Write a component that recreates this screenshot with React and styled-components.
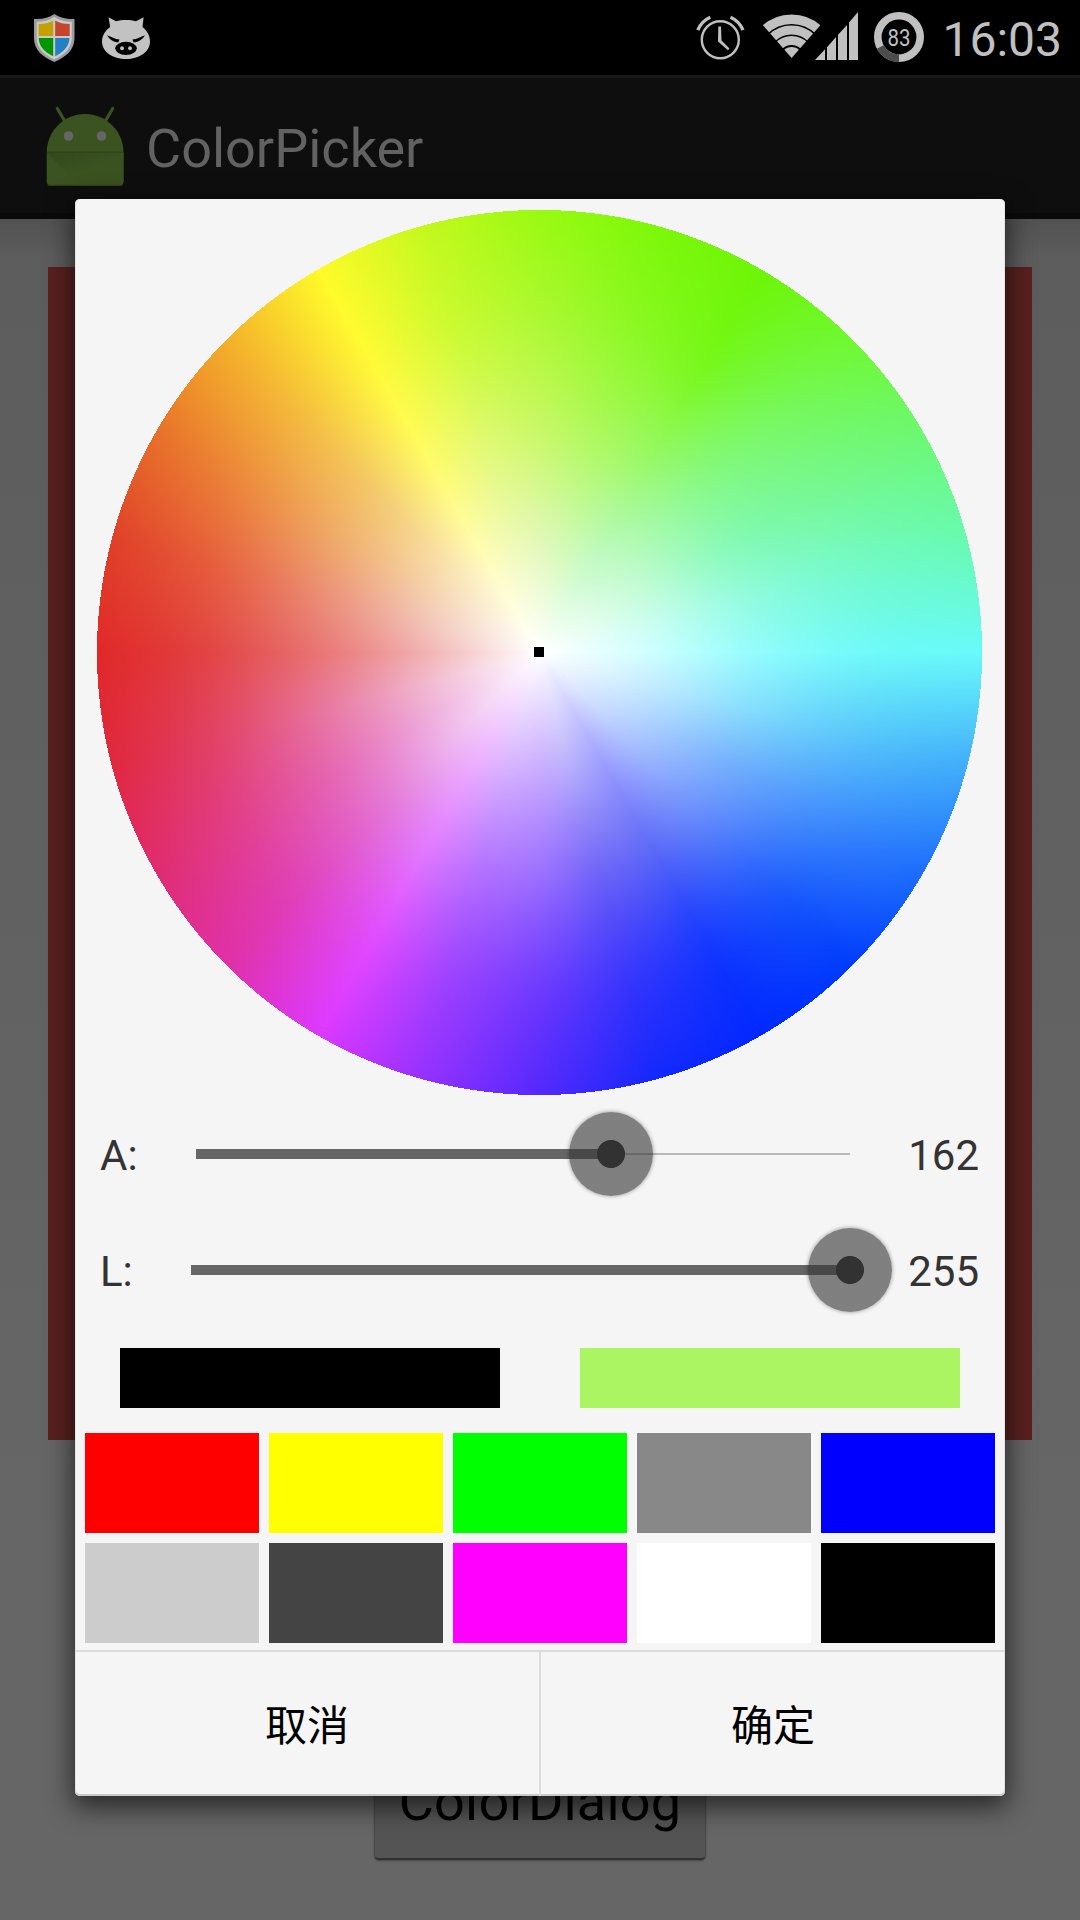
import React, { useLayoutEffect, useRef } from "react";
import styled, { createGlobalStyle } from "styled-components";

const GlobalStyle = createGlobalStyle`
  * { box-sizing: border-box; }
  body { margin: 0; background: #5e5e5e; }
`;

const Screen = styled.div`
  position: relative;
  width: 1080px;
  height: 1920px;
  overflow: hidden;
  display: flex;
  flex-direction: column;
  font-family: Roboto, "Noto Sans CJK SC", sans-serif;
  background: linear-gradient(#5b5b5b, #666666 80%);
`;

const StatusBar = styled.header`
  flex: none;
  display: flex;
  justify-content: space-between;
  height: 75px;
  padding: 0 18px 0 34px;
  background: #000;
`;

const StatusGroup = styled.div`
  display: flex;
  align-items: flex-start;

  svg {
    display: block;
    flex: none;
  }
`;

const Clock = styled.time`
  width: 116px;
  margin-left: 22px;
  display: flex;
  justify-content: flex-end;
  font-size: 48px;
  line-height: 79px;
  color: #c0c0c0;
  white-space: nowrap;
`;

const ActionBar = styled.div`
  flex: none;
  display: flex;
  align-items: center;
  gap: 18px;
  height: 144px;
  padding: 2px 0 0 42px;
  border-top: 3px solid #191919;
  border-bottom: 6px solid #0a0a0a;
  background: #0e0e0e;
`;

const AppTitle = styled.h1`
  margin: 0;
  padding-top: 5px;
  font-size: 54px;
  line-height: 64px;
  font-weight: 400;
  color: #626262;
`;

const Content = styled.main`
  flex: 1;
  display: flex;
  flex-direction: column;
  align-items: center;
  padding: 48px 48px 0;
  background: linear-gradient(rgba(0, 0, 0, 0.12), transparent 40px);
`;

const ColorPanel = styled.div`
  flex: none;
  width: 100%;
  height: 1173px;
  background: #59211f;
`;

const OpenButton = styled.button`
  flex: none;
  width: 332px;
  height: 116px;
  margin-top: 304px;
  padding: 0;
  border: 1px solid #4b4b4b;
  border-bottom: 2px solid #303030;
  border-radius: 5px;
  background: #545454;
  font: 400 54px/113px Roboto, sans-serif;
  letter-spacing: 0.2px;
  color: #000;
  box-shadow: 0 1px 2px rgba(0, 0, 0, 0.3);
`;

const Dialog = styled.section`
  position: absolute;
  left: 75px;
  top: 199px;
  width: 930px;
  height: 1597px;
  display: flex;
  flex-direction: column;
  border-radius: 5px;
  background: #f5f5f5;
  box-shadow: inset 0 -2px 0 #c8c9ca, inset 1px 0 0 #e4e4e4, inset -1px 0 0 #e4e4e4,
    0 9px 27px 2px rgba(0, 0, 0, 0.62);
`;

const WheelArea = styled.div`
  position: relative;
  flex: none;
  width: 886px;
  height: 886px;
  margin: 11px 0 0 21px;
`;

const WheelCanvas = styled.canvas`
  display: block;
`;

const WheelCursor = styled.i`
  position: absolute;
  left: 438px;
  top: 437px;
  width: 10px;
  height: 10px;
  background: #000;
`;

const SliderRow = styled.div`
  flex: none;
  display: flex;
  align-items: center;
  height: 116px;
  padding: 0 25px;
  font-size: 42px;
  color: #333;
`;

const SliderLabel = styled.label`
  flex: none;
  width: ${(p) => p.$width}px;
  padding-top: 3px;
`;

const SliderValue = styled.output`
  flex: none;
  width: 130px;
  padding: 3px 1px 0 0;
  text-align: right;
`;

const Track = styled.div`
  flex: 1;
  display: flex;
  align-items: center;
  height: 84px;
  background: linear-gradient(#b9b9b9, #b9b9b9) center / 100% 2px no-repeat;
`;

const TrackFill = styled.div`
  position: relative;
  height: 10px;
  background: #666;
`;

const Thumb = styled.i`
  position: absolute;
  right: -42px;
  top: -37px;
  width: 84px;
  height: 84px;
  border-radius: 50%;
  background: radial-gradient(circle, #323232 13.6px, rgba(53, 53, 53, 0.61) 14.4px);
  box-shadow: 0 0 4px rgba(0, 0, 0, 0.4);
`;

const Comparison = styled.div`
  flex: none;
  display: grid;
  grid-template-columns: 380px 380px;
  justify-content: space-between;
  height: 60px;
  margin: 20px 45px 25px;
`;

const Swatches = styled.div`
  flex: none;
  display: grid;
  grid-template-columns: repeat(5, 1fr);
  grid-auto-rows: 100px;
  gap: 10px;
  padding: 0 10px;
`;

const Swatch = styled.div`
  background: ${(p) => p.$color};
`;

const DialogButtons = styled.footer`
  flex: 1;
  display: flex;
  margin-top: 7px;
  border-top: 2px solid #dcdcdc;
`;

const DialogButton = styled.button`
  flex: 1;
  padding: 0 0 4px;
  border: 0;
  background: none;
  font: 400 42px "Noto Sans CJK SC", sans-serif;
  color: #000;

  & + & {
    flex-basis: 2px;
    border-left: 2px solid #dcdcdc;
  }
`;

/* Wheel colours every 15 degrees, counter-clockwise from the right,
   at a quarter, a half, three quarters and the whole of the radius. */
const SPOKES = [
  "cdffff 92fcfd 70faf9 68fafa",
  "ccfdf0 90fbdc 74fac8 68fab0",
  "c8fcdc 86f9b4 76f890 6cf870",
  "c4fbcc 8cf990 78f860 70f830",
  "c0fac0 98f868 78f71c 6df506",
  "d0fab4 aef860 90f828 7cf808",
  "e2f8b8 c8f868 aef834 98fa10",
  "f0fab8 e0f970 ccfa34 c4f81c",
  "fffcb8 fffb68 fffa38 fffa28",
  "fae8b8 f4cc70 f4bc40 f4b028",
  "f6d8b8 f0b070 ec8c40 e87028",
  "f3c8bc eb9078 e66040 e04028",
  "f2b4b4 e87474 e24444 e02828",
  "f2bcd0 e878a0 e24468 e02840",
  "f0b8e0 e670b8 e24490 e02c70",
  "f0c0f0 e474d4 e044bc e030a8",
  "eeb8ff e27cff e04cff dc38ff",
  "d8b8ff b474ff 9c44ff 9430ff",
  "ccb0ff 9c70ff 703cfe 5428fc",
  "bcb4fc 7468f8 3c38fc 1428fc",
  "a8a8ff 606cf8 183afe 0028ff",
  "b4c8ff 6c90fc 205cfc 003cfc",
  "bcdcff 74b0fc 408cfc 1c6cfc",
  "c8eeff 84dcfc 58c4fa 40acfa",
].map((line) => [
  [255, 255, 255],
  ...line.split(" ").map((hex) => [0, 2, 4].map((i) => parseInt(hex.slice(i, i + 2), 16))),
]);

function spokeColor(spoke, t, channel) {
  const i = Math.min(3, Math.floor(t));
  const f = t - i;
  const b = spoke[i][channel];
  const c = spoke[i + 1][channel];
  const a = i > 0 ? spoke[i - 1][channel] : 2 * b - c;
  const d = i < 3 ? spoke[i + 2][channel] : 2 * c - b;
  return b + 0.5 * f * (c - a + f * (2 * a - 5 * b + 4 * c - d + f * (3 * (b - c) + d - a)));
}

function ColorWheel() {
  const ref = useRef(null);
  useLayoutEffect(() => {
    const size = 886;
    const center = 443.5;
    const radius = 442.5;
    const ctx = ref.current.getContext("2d");
    const image = ctx.createImageData(size, size);
    for (let y = 0; y < size; y++) {
      for (let x = 0; x < size; x++) {
        const dx = x + 0.5 - center;
        const dy = 442.5 - y - 0.5;
        const r = Math.hypot(dx, dy);
        if (r > radius) continue;
        const turn = (((Math.atan2(dy, dx) / Math.PI) * 12 + 24) % 24 + 24) % 24;
        const s = Math.floor(turn);
        const f = turn - s;
        const t = (r / radius) * 4;
        const at = (y * size + x) * 4;
        for (let c = 0; c < 3; c++) {
          image.data[at + c] =
            spokeColor(SPOKES[s % 24], t, c) * (1 - f) + spokeColor(SPOKES[(s + 1) % 24], t, c) * f;
        }
        image.data[at + 3] = 255;
      }
    }
    ctx.putImageData(image, 0, 0);
  }, []);
  return (
    <WheelArea>
      <WheelCanvas ref={ref} width={886} height={886} />
      <WheelCursor />
    </WheelArea>
  );
}

function Slider({ label, labelWidth, value }) {
  return (
    <SliderRow>
      <SliderLabel $width={labelWidth}>{label}</SliderLabel>
      <Track>
        <TrackFill style={{ width: `${(value / 255) * 100}%` }}>
          <Thumb />
        </TrackFill>
      </Track>
      <SliderValue>{value}</SliderValue>
    </SliderRow>
  );
}

const ShieldIcon = () => (
  <svg width="41" height="75" viewBox="34 0 41 75">
    <path d="M54.300 14C60 18 67 19.500 74.500 19V38C74.500 50 66 57 54.300 62C42.500 57 34 50 34 38V19C42 19.500 49 18 54.300 14Z" fill="#9c9c9c" />
    <path d="M54.300 17C60 20.500 66 22 71.800 21.800V38C71.800 48 65 54.500 54.300 59.300C43.500 54.500 36.700 48 36.700 38V21.800C42.500 22 49 20.500 54.300 17Z" fill="#cacaca" />
    <path d="M53.200 20.500V36H38.600V24C44 24 49 23 53.200 20.500Z" fill="#c4a000" />
    <path d="M55.200 20.500V36H69.700V24C64 24 59 23 55.200 20.500Z" fill="#c4452c" />
    <path d="M53.200 38V56.200C44 52 39 46 38.700 38Z" fill="#009600" />
    <path d="M55.200 38V56.200C64 52 69 46 69.500 38Z" fill="#2480c4" />
  </svg>
);

const PigSvg = styled.svg`
  margin-left: 26px;
`;

const PigIcon = () => (
  <PigSvg width="50" height="75" viewBox="101 0 50 75">
    <path d="M108.500 17.200L116 21.200C122 19.700 130 19.700 136 21.200L143.600 17.200L142.500 27C147.500 31 150 36 150 41.500C150 52 139 59 126 59C113 59 102 52 102 41.500C102 36 105 30.500 110.200 27Z" fill="#c2c2c2" />
    <path d="M107 35.300C111.500 36.800 114.500 39.300 119.500 39.500L118.500 42.300C114.500 42.600 110.300 40.500 107 35.300ZM145 35.300C140.500 36.800 137.500 39.300 132.500 39.500L133.500 42.300C137.500 42.600 141.700 40.500 145 35.300Z" fill="#000" />
    <ellipse cx="126" cy="48.300" rx="10.800" ry="6.600" fill="#000" />
    <ellipse cx="122" cy="48.300" rx="1.900" ry="2" fill="#c2c2c2" />
    <ellipse cx="130" cy="48.300" rx="1.900" ry="2" fill="#c2c2c2" />
  </PigSvg>
);

const AlarmIcon = () => (
  <svg width="50" height="75" viewBox="695 0 50 75" fill="none" stroke="#c0c0c0">
    <circle cx="720.300" cy="39.700" r="18.500" strokeWidth="2.400" />
    <path d="M697.800 30.200A24 24 0 0 1 710.300 17.300M730.500 17.300A24 24 0 0 1 743 30.200" strokeWidth="3.400" />
    <path d="M718.300 26.500H721L721.500 40.500L729.500 48.500L728 50.200L718 41.500Z" fill="#c0c0c0" stroke="none" />
  </svg>
);

const WifiSvg = styled.svg`
  margin-left: 17px;
`;

const WifiIcon = () => (
  <WifiSvg width="60" height="75" viewBox="762 0 60 75">
    <defs>
      <clipPath id="wifi-cone">
        <path d="M791.600 58L762.300 24.500V0H821V24.500Z" />
      </clipPath>
    </defs>
    <g clipPath="url(#wifi-cone)" fill="none" stroke="#c0c0c0">
      <circle cx="791.600" cy="58" r="11" fill="#c0c0c0" stroke="none" />
      <circle cx="791.600" cy="58.500" r="18" strokeWidth="9" />
      <circle cx="791.600" cy="58.500" r="28.500" strokeWidth="9" />
      <circle cx="791.600" cy="58.500" r="39.300" strokeWidth="9.500" />
    </g>
  </WifiSvg>
);

const SignalSvg = styled.svg`
  margin-left: -7px;
`;

const SignalIcon = () => (
  <SignalSvg width="44" height="75" viewBox="815 0 44 75">
    <path d="M815 60L825 49.300V60ZM827 47.200L836 37V60H827ZM838 34.700L847 25V60H838ZM849 22.500L858 12V60H849Z" fill="#c0c0c0" />
  </SignalSvg>
);

const BatterySvg = styled.svg`
  margin-left: 15px;
`;

const BatteryIcon = () => (
  <BatterySvg width="50" height="75" viewBox="874 0 50 75">
    <circle cx="899" cy="37" r="21.200" fill="none" stroke="#c0c0c0" strokeWidth="7.600" />
    <path d="M899 58.200A21.200 21.200 0 0 1 880.300 47" fill="none" stroke="#4c4c4c" strokeWidth="7.600" />
    <text x="887.500" y="45.800" fontSize="24.500" textLength="23" lengthAdjust="spacingAndGlyphs" fill="#c0c0c0" fontFamily="Roboto, sans-serif">
      83
    </text>
  </BatterySvg>
);

const AndroidIcon = () => (
  <svg width="86" height="90" viewBox="42 102 86 90">
    <defs>
      <linearGradient id="fold" x1="0" y1="0" x2="0.8" y2="0.9">
        <stop offset="0" stopColor="#33491d" />
        <stop offset="0.6" stopColor="#3a5120" />
      </linearGradient>
    </defs>
    <path d="M57.300 108.500L65 121.500M112.700 108.500L105 121.500" stroke="#3b5321" strokeWidth="3.200" strokeLinecap="round" />
    <path d="M46.700 152.500C46.700 131 64 114 85 114S123.500 131 123.500 152.500V181Q123.500 185.500 119 185.500H51.200Q46.700 185.500 46.700 181Z" fill="#3b5321" />
    <path d="M47 153H123.500V181Q123.500 185.500 119 185.500H79Z" fill="url(#fold)" />
    <path d="M46.700 152.200H123.500" stroke="#2d4119" strokeWidth="1" />
    <path d="M47.500 185.300H122.500" stroke="#2d4019" strokeWidth="1" />
    <circle cx="68.500" cy="136" r="4.800" fill="#666" />
    <circle cx="101.500" cy="136" r="4.800" fill="#666" />
  </svg>
);

const PALETTE = [
  "#ff0000", "#ffff00", "#00ff00", "#888888", "#0000ff",
  "#cccccc", "#444444", "#ff00ff", "#ffffff", "#000000",
];

export default function App() {
  return (
    <>
      <GlobalStyle />
      <Screen>
        <StatusBar>
          <StatusGroup>
            <ShieldIcon />
            <PigIcon />
          </StatusGroup>
          <StatusGroup>
            <AlarmIcon />
            <WifiIcon />
            <SignalIcon />
            <BatteryIcon />
            <Clock>16:03</Clock>
          </StatusGroup>
        </StatusBar>
        <ActionBar>
          <AndroidIcon />
          <AppTitle>ColorPicker</AppTitle>
        </ActionBar>
        <Content>
          <ColorPanel />
          <OpenButton>ColorDialog</OpenButton>
        </Content>
        <Dialog>
          <ColorWheel />
          <Slider label="A:" labelWidth={96} value={162} />
          <Slider label="L:" labelWidth={91} value={255} />
          <Comparison>
            <Swatch $color="#000000" />
            <Swatch $color="#abf562" />
          </Comparison>
          <Swatches>
            {PALETTE.map((color) => (
              <Swatch key={color} $color={color} />
            ))}
          </Swatches>
          <DialogButtons>
            <DialogButton>取消</DialogButton>
            <DialogButton>确定</DialogButton>
          </DialogButtons>
        </Dialog>
      </Screen>
    </>
  );
}
